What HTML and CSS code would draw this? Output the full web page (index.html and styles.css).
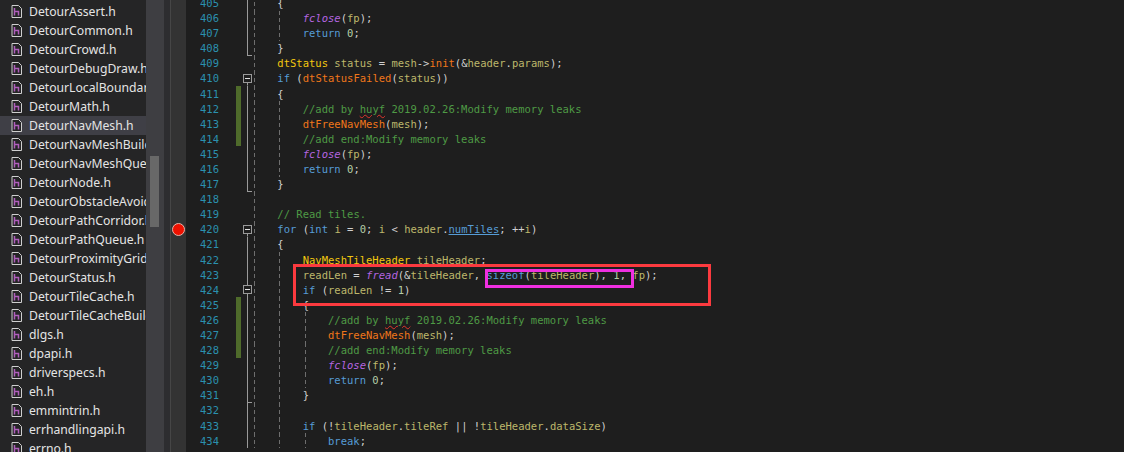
FILE: index.html
```html
<!DOCTYPE html>
<html lang="en">
<head>
<meta charset="utf-8">
<title>DetourNavMesh</title>
<link rel="stylesheet" href="styles.css">
</head>
<body>
<svg class="defs" width="0" height="0" aria-hidden="true">
  <symbol id="hfile" viewBox="0 0 11 13">
    <path d="M1 .5H7.5L10.5 3.5V12.5H1Z" fill="#252526" stroke="#cfcfcf"/>
    <path d="M3.5 3V10.5M3.5 6.5H7.5V10.5" fill="none" stroke="#b05fbc" stroke-width="1.5"/>
  </symbol>
</svg>
<div class="app">
  <aside class="files">
    <div class="file"><svg class="ficon"><use href="#hfile"/></svg><span>DetourAssert.h</span></div>
    <div class="file"><svg class="ficon"><use href="#hfile"/></svg><span>DetourCommon.h</span></div>
    <div class="file"><svg class="ficon"><use href="#hfile"/></svg><span>DetourCrowd.h</span></div>
    <div class="file"><svg class="ficon"><use href="#hfile"/></svg><span>DetourDebugDraw.h</span></div>
    <div class="file"><svg class="ficon"><use href="#hfile"/></svg><span>DetourLocalBoundary.h</span></div>
    <div class="file"><svg class="ficon"><use href="#hfile"/></svg><span>DetourMath.h</span></div>
    <div class="file active"><svg class="ficon"><use href="#hfile"/></svg><span>DetourNavMesh.h</span></div>
    <div class="file"><svg class="ficon"><use href="#hfile"/></svg><span>DetourNavMeshBuilder.h</span></div>
    <div class="file"><svg class="ficon"><use href="#hfile"/></svg><span>DetourNavMeshQuery.h</span></div>
    <div class="file"><svg class="ficon"><use href="#hfile"/></svg><span>DetourNode.h</span></div>
    <div class="file"><svg class="ficon"><use href="#hfile"/></svg><span>DetourObstacleAvoidance.h</span></div>
    <div class="file"><svg class="ficon"><use href="#hfile"/></svg><span>DetourPathCorridor.h</span></div>
    <div class="file"><svg class="ficon"><use href="#hfile"/></svg><span>DetourPathQueue.h</span></div>
    <div class="file"><svg class="ficon"><use href="#hfile"/></svg><span>DetourProximityGrid.h</span></div>
    <div class="file"><svg class="ficon"><use href="#hfile"/></svg><span>DetourStatus.h</span></div>
    <div class="file"><svg class="ficon"><use href="#hfile"/></svg><span>DetourTileCache.h</span></div>
    <div class="file"><svg class="ficon"><use href="#hfile"/></svg><span>DetourTileCacheBuilder.h</span></div>
    <div class="file"><svg class="ficon"><use href="#hfile"/></svg><span>dlgs.h</span></div>
    <div class="file"><svg class="ficon"><use href="#hfile"/></svg><span>dpapi.h</span></div>
    <div class="file"><svg class="ficon"><use href="#hfile"/></svg><span>driverspecs.h</span></div>
    <div class="file"><svg class="ficon"><use href="#hfile"/></svg><span>eh.h</span></div>
    <div class="file"><svg class="ficon"><use href="#hfile"/></svg><span>emmintrin.h</span></div>
    <div class="file"><svg class="ficon"><use href="#hfile"/></svg><span>errhandlingapi.h</span></div>
    <div class="file"><svg class="ficon"><use href="#hfile"/></svg><span>errno.h</span></div>
  </aside>
  <div class="scrollbar"><div class="thumb"></div></div>
  <div class="splitter"></div>
  <div class="glyphs"><div class="breakpoint"></div></div>
  <main class="lines">
    <div class="row"><span class="num">405</span><span class="chg"></span><span class="fold line"></span><span class="ind"></span><span class="p">{</span></div>
    <div class="row"><span class="num">406</span><span class="chg"></span><span class="fold line"></span><span class="ind"></span><span class="ind g"></span><span class="m">fclose</span><span class="p">(</span><span class="v">fp</span><span class="p">);</span></div>
    <div class="row"><span class="num">407</span><span class="chg"></span><span class="fold line"></span><span class="ind"></span><span class="ind g"></span><span class="k">return</span><span class="p"> </span><span class="n">0</span><span class="p">;</span></div>
    <div class="row"><span class="num">408</span><span class="chg"></span><span class="fold end"></span><span class="ind"></span><span class="p">}</span></div>
    <div class="row"><span class="num">409</span><span class="chg"></span><span class="fold"></span><span class="ind"></span><span class="t">dtStatus</span><span class="v"> status </span><span class="p">= </span><span class="v">mesh</span><span class="p">-&gt;</span><span class="f">init</span><span class="p">(&amp;</span><span class="v">header</span><span class="p">.</span><span class="v">params</span><span class="p">);</span></div>
    <div class="row"><span class="num">410</span><span class="chg"></span><span class="fold open"><i class="box"></i></span><span class="ind"></span><span class="k">if</span><span class="p"> (</span><span class="f">dtStatusFailed</span><span class="p">(</span><span class="v">status</span><span class="p">))</span></div>
    <div class="row"><span class="num">411</span><span class="chg on"></span><span class="fold line"></span><span class="ind"></span><span class="p">{</span></div>
    <div class="row"><span class="num">412</span><span class="chg on"></span><span class="fold line"></span><span class="ind"></span><span class="ind g"></span><span class="c">//add by <span class="sq">huyf</span> 2019.02.26:Modify memory leaks</span></div>
    <div class="row"><span class="num">413</span><span class="chg on"></span><span class="fold line"></span><span class="ind"></span><span class="ind g"></span><span class="f">dtFreeNavMesh</span><span class="p">(</span><span class="v">mesh</span><span class="p">);</span></div>
    <div class="row"><span class="num">414</span><span class="chg on"></span><span class="fold line"></span><span class="ind"></span><span class="ind g"></span><span class="c">//add end:Modify memory leaks</span></div>
    <div class="row"><span class="num">415</span><span class="chg"></span><span class="fold line"></span><span class="ind"></span><span class="ind g"></span><span class="m">fclose</span><span class="p">(</span><span class="v">fp</span><span class="p">);</span></div>
    <div class="row"><span class="num">416</span><span class="chg"></span><span class="fold line"></span><span class="ind"></span><span class="ind g"></span><span class="k">return</span><span class="p"> </span><span class="n">0</span><span class="p">;</span></div>
    <div class="row"><span class="num">417</span><span class="chg"></span><span class="fold end"></span><span class="ind"></span><span class="p">}</span></div>
    <div class="row"><span class="num">418</span><span class="chg"></span><span class="fold"></span><span class="ind"></span></div>
    <div class="row"><span class="num">419</span><span class="chg"></span><span class="fold"></span><span class="ind"></span><span class="c">// Read tiles.</span></div>
    <div class="row"><span class="num">420</span><span class="chg"></span><span class="fold open"><i class="box"></i></span><span class="ind"></span><span class="k">for</span><span class="p"> (</span><span class="k">int</span><span class="v"> i </span><span class="p">= </span><span class="n">0</span><span class="p">; </span><span class="v">i </span><span class="p">&lt; </span><span class="v">header</span><span class="p">.</span><span class="lnk">numTiles</span><span class="p">; ++</span><span class="v">i</span><span class="p">)</span></div>
    <div class="row"><span class="num">421</span><span class="chg"></span><span class="fold line"></span><span class="ind"></span><span class="p">{</span></div>
    <div class="row"><span class="num">422</span><span class="chg"></span><span class="fold line"></span><span class="ind"></span><span class="ind g"></span><span class="t">NavMeshTileHeader</span><span class="v"> tileHeader</span><span class="p">;</span></div>
    <div class="row"><span class="num">423</span><span class="chg"></span><span class="fold line"></span><span class="ind"></span><span class="ind g"></span><span class="v">readLen </span><span class="p">= </span><span class="m">fread</span><span class="p">(&amp;</span><span class="v">tileHeader</span><span class="p">, </span><span class="k">sizeof</span><span class="p">(</span><span class="v">tileHeader</span><span class="p">), </span><span class="n">1</span><span class="p">, </span><span class="v">fp</span><span class="p">);</span></div>
    <div class="row"><span class="num">424</span><span class="chg"></span><span class="fold line"><i class="box"></i></span><span class="ind"></span><span class="ind g"></span><span class="k">if</span><span class="p"> (</span><span class="v">readLen </span><span class="p">!= </span><span class="n">1</span><span class="p">)</span></div>
    <div class="row"><span class="num">425</span><span class="chg on"></span><span class="fold line"></span><span class="ind"></span><span class="ind g"></span><span class="p">{</span></div>
    <div class="row"><span class="num">426</span><span class="chg on"></span><span class="fold line"></span><span class="ind"></span><span class="ind g"></span><span class="ind g"></span><span class="c">//add by <span class="sq">huyf</span> 2019.02.26:Modify memory leaks</span></div>
    <div class="row"><span class="num">427</span><span class="chg on"></span><span class="fold line"></span><span class="ind"></span><span class="ind g"></span><span class="ind g"></span><span class="f">dtFreeNavMesh</span><span class="p">(</span><span class="v">mesh</span><span class="p">);</span></div>
    <div class="row"><span class="num">428</span><span class="chg on"></span><span class="fold line"></span><span class="ind"></span><span class="ind g"></span><span class="ind g"></span><span class="c">//add end:Modify memory leaks</span></div>
    <div class="row"><span class="num">429</span><span class="chg"></span><span class="fold line"></span><span class="ind"></span><span class="ind g"></span><span class="ind g"></span><span class="m">fclose</span><span class="p">(</span><span class="v">fp</span><span class="p">);</span></div>
    <div class="row"><span class="num">430</span><span class="chg"></span><span class="fold line"></span><span class="ind"></span><span class="ind g"></span><span class="ind g"></span><span class="k">return</span><span class="p"> </span><span class="n">0</span><span class="p">;</span></div>
    <div class="row"><span class="num">431</span><span class="chg"></span><span class="fold line end"></span><span class="ind"></span><span class="ind g"></span><span class="p">}</span></div>
    <div class="row"><span class="num">432</span><span class="chg"></span><span class="fold line"></span><span class="ind"></span><span class="ind g"></span></div>
    <div class="row"><span class="num">433</span><span class="chg"></span><span class="fold line"></span><span class="ind"></span><span class="ind g"></span><span class="k">if</span><span class="p"> (!</span><span class="v">tileHeader</span><span class="p">.</span><span class="v">tileRef </span><span class="p">|| !</span><span class="v">tileHeader</span><span class="p">.</span><span class="v">dataSize</span><span class="p">)</span></div>
    <div class="row"><span class="num">434</span><span class="chg"></span><span class="fold line"></span><span class="ind"></span><span class="ind g"></span><span class="ind g"></span><span class="k">break</span><span class="p">;</span></div>
  </main>
  <div class="mark-red"></div>
  <div class="mark-magenta"></div>
</div>
</body>
</html>
```
FILE: styles.css
```css
html, body {
  margin: 0;
  padding: 0;
  background: #1e1e1e;
}
.defs {
  position: absolute;
}
.app {
  position: relative;
  display: flex;
  width: 1124px;
  height: 452px;
  overflow: hidden;
  background: #1e1e1e;
}
.files {
  flex: none;
  width: 146px;
  padding-top: 2px;
  background: #252526;
  overflow: hidden;
  font-family: "Noto Sans", sans-serif;
  font-size: 12.2px;
  color: #e4e4e4;
}
.file {
  display: flex;
  align-items: center;
  height: 19px;
  padding-left: 11px;
  white-space: nowrap;
  overflow: hidden;
}
.file.active {
  background: #3f3f46;
}
.ficon {
  flex: none;
  width: 11px;
  height: 13px;
  margin-right: 7px;
}
.scrollbar {
  flex: none;
  width: 18px;
  padding: 156px 5px 0 4px;
  box-sizing: border-box;
  background: #3e3e42;
}
.thumb {
  height: 71px;
  background: #686868;
}
.splitter {
  flex: none;
  width: 6px;
  background: #2d2d30;
}
.glyphs {
  flex: none;
  width: 15px;
  padding-top: 223px;
  background: #333333;
  border-left: 1px solid #464646;
}
.breakpoint {
  width: 13px;
  height: 13px;
  margin-left: 1px;
  box-sizing: border-box;
  border: 1px solid #e8b4a8;
  border-radius: 50%;
  background: #ee1100;
}
.lines {
  flex: 1;
  margin-top: -4.6px;
  font-family: "DejaVu Sans Mono", monospace;
  font-size: 10.5px;
  letter-spacing: 0.016px;
  color: #d0d0d0;
}
.row {
  display: flex;
  align-items: center;
  height: 15.1px;
  white-space: pre;
}
.num {
  flex: none;
  width: 33px;
  text-align: right;
  color: #2b91af;
}
.chg {
  flex: none;
  align-self: stretch;
  width: 5px;
  margin-left: 17px;
}
.chg.on {
  background: #4f6b2b;
}
.fold {
  flex: none;
  align-self: stretch;
  display: flex;
  align-items: center;
  justify-content: center;
  width: 11px;
  margin-left: 1px;
  background-repeat: no-repeat;
}
.fold.line {
  background-image: linear-gradient(#9a9a9a, #9a9a9a);
  background-size: 1px 100%;
  background-position: 5px 0;
}
.fold.end {
  background-image: linear-gradient(#9a9a9a, #9a9a9a), linear-gradient(#9a9a9a, #9a9a9a);
  background-size: 1px 100%, 5px 1px;
  background-position: 5px 0, 5px 100%;
}
.fold.open {
  background-image: linear-gradient(#9a9a9a, #9a9a9a);
  background-size: 1px 50%;
  background-position: 5px 100%;
}
.box {
  display: block;
  width: 9px;
  height: 9px;
  box-sizing: border-box;
  border: 1px solid #9a9a9a;
  background: linear-gradient(#e0e0e0, #e0e0e0) center / 5px 1px no-repeat #1e1e1e;
}
.ind {
  flex: none;
  align-self: stretch;
  width: 25.34px;
}
.row > .fold + .ind {
  width: 24.34px;
  background: repeating-linear-gradient(to bottom, #6e6e6e 0 4px, transparent 4px 7px) 1px 0 / 1px 100% no-repeat;
}
.ind.g {
  background: repeating-linear-gradient(to bottom, #6e6e6e 0 4px, transparent 4px 7px) 2px 0 / 1px 100% no-repeat;
}
.k { color: #569cd6; }
.c { color: #4e9a45; }
.f { color: #f0761a; }
.m { color: #b565e0; font-style: italic; }
.t { color: #f2c80f; }
.v { color: #bdb76b; }
.p { color: #d0d0d0; }
.n { color: #b5cea8; }
.lnk {
  color: #569cd6;
  text-decoration: underline;
}
.sq {
  text-decoration: underline wavy #e0352b;
  text-decoration-thickness: 1px;
}
.mark-red {
  position: absolute;
  left: 293px;
  top: 264px;
  width: 412px;
  height: 36px;
  border: 3px solid #fb3a3f;
}
.mark-magenta {
  position: absolute;
  left: 485px;
  top: 269px;
  width: 143px;
  height: 13px;
  border: 3px solid #f02fe0;
}
```
